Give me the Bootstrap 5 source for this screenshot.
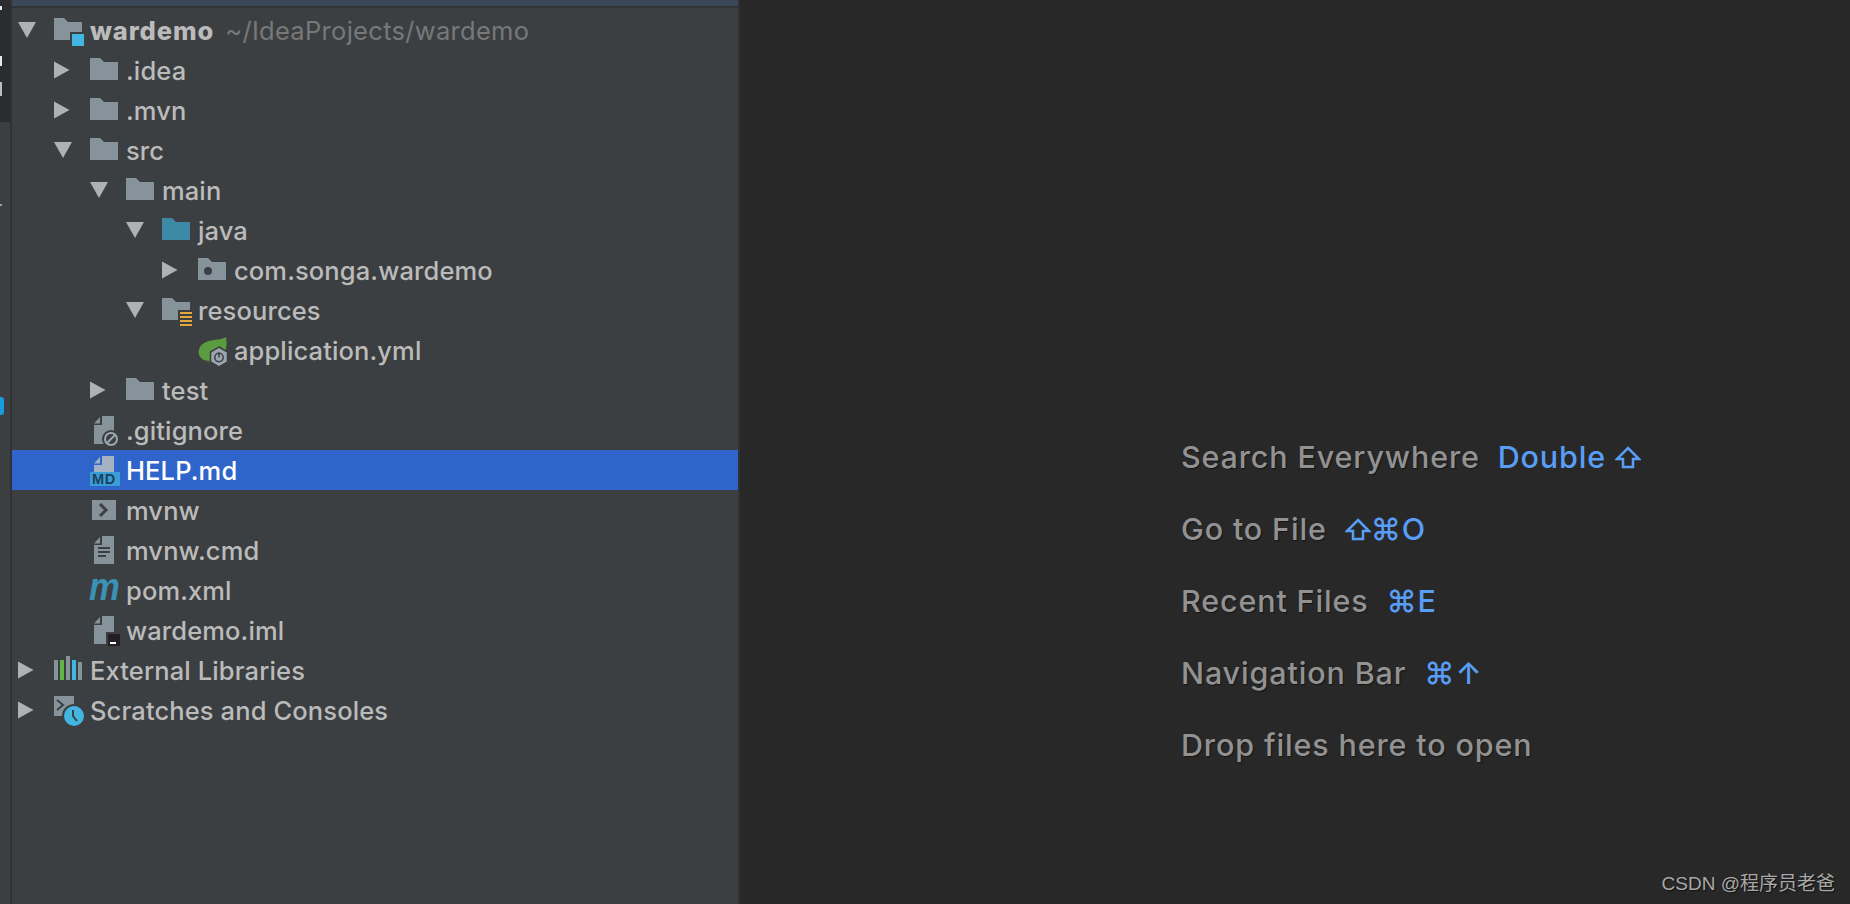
<!DOCTYPE html>
<html lang="en">
<head>
<meta charset="utf-8">
<title>wardemo</title>
<link href="https://cdn.jsdelivr.net/npm/bootstrap@5.3.0/dist/css/bootstrap.min.css" rel="stylesheet">
<style>
html,body{height:100%;margin:0;overflow:hidden;background:#282828}
body{font-family:Inter,"Noto Sans",sans-serif}
.ide{height:904px;width:1850px}
.edge{width:12px;background:#3c3f41;border-right:2px solid #323232;flex:none;position:relative}
.edge-top{height:122px;background:#2b2c2e;width:10px}
.edge-mark{position:absolute;left:0;background:#e8e8e8;width:2px}
.mark-a{top:6px;height:4px}
.mark-b{top:56px;height:10px}
.mark-c{top:82px;height:14px;background:#bdbdbd}
.mark-d{top:204px;height:2px;background:#a0a0a0}
.edge-pill{position:absolute;left:0;top:397px;width:4px;height:18px;background:#1a9be0;border-radius:0 3px 3px 0}
.tree-pane{width:728px;flex:none;background:#3c3f41;border-right:2px solid #323232}
.tree-head{height:8px;background:#3b4858;border-bottom:2px solid #323436}
.tree-body{padding-top:2px}
.tree-row{height:40px;color:#bbbbbb;font-size:25.5px;font-weight:500;letter-spacing:.12px;white-space:nowrap}
.tree-row>span{padding-top:3px}
.tree-row.active-row{background:#2f65ca;color:#fff}
.indent-0{padding-left:6px}.indent-1{padding-left:42px}.indent-2{padding-left:78px}.indent-3{padding-left:114px}.indent-4{padding-left:150px}
.arrow{width:18px;height:18px;flex:none;margin-right:18px;display:block}
.no-arrow{width:36px;flex:none}
.ico{width:36px;height:36px;flex:none;display:block;overflow:visible}
.tree-row>.strong-name{font-weight:800;letter-spacing:.9px}
.tree-row>.path-hint{color:#787878;margin-left:11px;font-weight:400;letter-spacing:.3px}
.editor-pane{background:#282828}
.hint-list{padding-left:441px;padding-top:434px}
.hint-row{height:72px;font-size:30.5px;font-weight:500;letter-spacing:.85px;color:#929292;text-shadow:1px 1px 1px #161616;white-space:nowrap}
.hint-key{color:#589df6;margin-left:18px;text-shadow:none}
.key-svg{height:26px;width:26px;display:inline-block;vertical-align:-3px}
.md-tag{font:700 14.5px "Liberation Sans",sans-serif;letter-spacing:.6px;fill:#1f3f5f}
.maven-m{font:italic 700 38px "Liberation Sans",sans-serif;fill:#3a93b5}
.stamp{position:absolute;right:15px;bottom:9px;color:#a8a8a8;font:19px "Liberation Sans","Noto Sans CJK SC",sans-serif;text-shadow:1px 1px 1px #111}
</style>
</head>
<body>
<svg width="0" height="0" class="d-block position-absolute">
  <defs>
    <symbol id="s-folder" viewBox="0 0 36 36"><path d="M0 6h10l4 4h14v18H0z" fill="#87939a"/></symbol>
    <symbol id="s-right" viewBox="0 0 18 18"><path d="M0 .5l15.500 8.500L0 17.500z" fill="#afb1b3"/></symbol>
    <symbol id="s-down" viewBox="0 0 18 18"><path d="M0 1h18l-9 16z" fill="#afb1b3"/></symbol>
    <symbol id="s-file" viewBox="0 0 36 36"><path d="M12 4h12v28H4V13h8zM10 5v6.500H4z" fill="#87939a"/></symbol>
  </defs>
</svg>
<div class="ide d-flex position-relative">
  <div class="edge">
    <div class="edge-top"></div>
    <div class="edge-mark mark-a"></div>
    <div class="edge-mark mark-b"></div>
    <div class="edge-mark mark-c"></div>
    <div class="edge-mark mark-d"></div>
    <div class="edge-pill"></div>
  </div>
  <div class="tree-pane d-flex flex-column">
    <div class="tree-head"></div>
    <div class="tree-body">

      <div class="tree-row indent-0 d-flex align-items-center">
        <svg class="arrow"><use href="#s-down"/></svg>
        <svg class="ico" viewBox="0 0 36 36"><path d="M0 6h10l4 4h14v18H0z" fill="#87939a"/><rect x="16" y="20" width="16" height="16" fill="#3c3f41"/><rect x="18" y="22" width="12" height="12" fill="#40b6e0"/></svg>
        <span class="strong-name">wardemo</span><span class="path-hint">~/IdeaProjects/wardemo</span>
      </div>

      <div class="tree-row indent-1 d-flex align-items-center"><svg class="arrow"><use href="#s-right"/></svg><svg class="ico"><use href="#s-folder"/></svg><span>.idea</span></div>
      <div class="tree-row indent-1 d-flex align-items-center"><svg class="arrow"><use href="#s-right"/></svg><svg class="ico"><use href="#s-folder"/></svg><span>.mvn</span></div>
      <div class="tree-row indent-1 d-flex align-items-center"><svg class="arrow"><use href="#s-down"/></svg><svg class="ico"><use href="#s-folder"/></svg><span>src</span></div>
      <div class="tree-row indent-2 d-flex align-items-center"><svg class="arrow"><use href="#s-down"/></svg><svg class="ico"><use href="#s-folder"/></svg><span>main</span></div>
      <div class="tree-row indent-3 d-flex align-items-center"><svg class="arrow"><use href="#s-down"/></svg><svg class="ico" viewBox="0 0 36 36"><path d="M0 6h10l4 4h14v18H0z" fill="#3d88a4"/></svg><span>java</span></div>
      <div class="tree-row indent-4 d-flex align-items-center"><svg class="arrow"><use href="#s-right"/></svg><svg class="ico" viewBox="0 0 36 36"><path d="M0 6h10l4 4h14v18H0z" fill="#87939a"/><circle cx="10" cy="19" r="4" fill="#3c3f41"/></svg><span>com.songa.wardemo</span></div>
      <div class="tree-row indent-3 d-flex align-items-center"><svg class="arrow"><use href="#s-down"/></svg><svg class="ico" viewBox="0 0 36 36"><path d="M0 6h10l4 4h14v18H0z" fill="#87939a"/><rect x="16" y="18" width="16" height="18" fill="#3c3f41"/><path d="M18 20h12v2H18zM18 24h12v2H18zM18 28h12v2H18zM18 32h12v2H18z" fill="#e5a73c"/></svg><span>resources</span></div>
      <div class="tree-row indent-4 d-flex align-items-center"><span class="no-arrow"></span><svg class="ico" viewBox="0 0 36 36"><path d="M28 5c1 6 1 13-3 19-4 5-12 6-19 4-5-2-7-8-4-13 3-5 9-6 14-7 5-1 9-1 12-3z" fill="#5a9c3f"/><path d="M7 29l5 1 1 1z" fill="#5a9c3f"/><path d="M21 15l8.500 5v10L21 35l-8.500-5V20z" fill="#9aa7b0" stroke="#3c3f41" stroke-width="1.500"/><circle cx="21" cy="25.500" r="4.200" fill="none" stroke="#3c3f41" stroke-width="1.500"/><path d="M21 20.500v5" stroke="#3c3f41" stroke-width="1.500"/></svg><span>application.yml</span></div>
      <div class="tree-row indent-2 d-flex align-items-center"><svg class="arrow"><use href="#s-right"/></svg><svg class="ico"><use href="#s-folder"/></svg><span>test</span></div>

      <div class="tree-row indent-1 d-flex align-items-center"><span class="no-arrow"></span><svg class="ico"><use href="#s-file"/><circle cx="21" cy="27" r="9" fill="#3c3f41"/><circle cx="21" cy="27" r="6" fill="none" stroke="#9aa7b0" stroke-width="2"/><path d="M17 31l8-8" stroke="#9aa7b0" stroke-width="2"/></svg><span>.gitignore</span></div>
      <div class="tree-row active-row indent-1 d-flex align-items-center"><span class="no-arrow"></span><svg class="ico"><path d="M12 4h12v16H4v-7h8zM10 5v6.500H4z" fill="#a3b3c2"/><rect x="0" y="20" width="30" height="14" fill="#389fd6"/><text x="2" y="32" class="md-tag">MD</text></svg><span>HELP.md</span></div>
      <div class="tree-row indent-1 d-flex align-items-center"><span class="no-arrow"></span><svg class="ico"><rect x="2" y="8" width="24" height="20" fill="#87939a"/><path d="M10 12l6 6-6 6" fill="none" stroke="#3c3f41" stroke-width="3"/></svg><span>mvnw</span></div>
      <div class="tree-row indent-1 d-flex align-items-center"><span class="no-arrow"></span><svg class="ico"><use href="#s-file"/><path d="M8 15h12v2H8zM8 19h12v2H8zM8 23h8v2H8z" fill="#3c3f41"/></svg><span>mvnw.cmd</span></div>
      <div class="tree-row indent-1 d-flex align-items-center"><span class="no-arrow"></span><svg class="ico"><text x="-1" y="28" class="maven-m" textLength="31" lengthAdjust="spacingAndGlyphs">m</text></svg><span>pom.xml</span></div>
      <div class="tree-row indent-1 d-flex align-items-center"><span class="no-arrow"></span><svg class="ico"><use href="#s-file"/><rect x="16" y="20" width="14" height="14" fill="#3c3f41"/><rect x="18" y="22" width="12" height="12" fill="#231f20"/><rect x="20" y="30" width="6" height="2" fill="#fff"/></svg><span>wardemo.iml</span></div>

      <div class="tree-row indent-0 d-flex align-items-center"><svg class="arrow"><use href="#s-right"/></svg><svg class="ico"><path d="M0 8h4v20H0zM12 4h4v24h-4zM24 10h4v18h-4z" fill="#87939a"/><path d="M6 8h4v20H6z" fill="#62b543"/><path d="M18 8h4v20h-4z" fill="#40b6e0"/></svg><span>External Libraries</span></div>
      <div class="tree-row indent-0 d-flex align-items-center"><svg class="arrow"><use href="#s-right"/></svg><svg class="ico"><rect x="0" y="4" width="20" height="20" fill="#87939a"/><path d="M3 8l6 5-6 5" fill="none" stroke="#3c3f41" stroke-width="2"/><circle cx="20" cy="24" r="12" fill="#3c3f41"/><circle cx="20" cy="24" r="10" fill="#40b6e0"/><path d="M19 18v6l4 5" fill="none" stroke="#3c3f41" stroke-width="2"/></svg><span>Scratches and Consoles</span></div>
    </div>
  </div>
  <div class="editor-pane flex-grow-1">
    <div class="hint-list">
      <div class="hint-row">Search Everywhere<span class="hint-key">Double <svg class="key-svg" viewBox="0 0 26 26"><path d="M13 3L24 14h-6v8H8v-8H2z" fill="none" stroke="#589df6" stroke-width="2.500"/></svg></span></div>
      <div class="hint-row">Go to File<span class="hint-key"><svg class="key-svg" viewBox="0 0 26 26"><path d="M13 3L24 14h-6v8H8v-8H2z" fill="none" stroke="#589df6" stroke-width="2.500"/></svg>⌘O</span></div>
      <div class="hint-row">Recent Files<span class="hint-key">⌘E</span></div>
      <div class="hint-row">Navigation Bar<span class="hint-key">⌘↑</span></div>
      <div class="hint-row">Drop files here to open</div>
    </div>
  </div>
  <div class="stamp">CSDN @程序员老爸</div>
</div>
</body>
</html>
